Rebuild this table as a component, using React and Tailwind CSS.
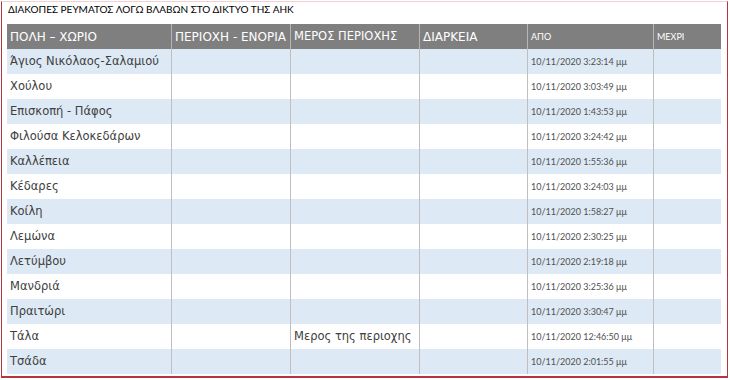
import React from "react";

const rows = [
  ["Άγιος Νικόλαος-Σαλαμιού", "", "", "10/11/2020 3:23:14 μμ"],
  ["Χούλου", "", "", "10/11/2020 3:03:49 μμ"],
  ["Επισκοπή - Πάφος", "", "", "10/11/2020 1:43:53 μμ"],
  ["Φιλούσα Κελοκεδάρων", "", "", "10/11/2020 3:24:42 μμ"],
  ["Καλλέπεια", "", "", "10/11/2020 1:55:36 μμ"],
  ["Κέδαρες", "", "", "10/11/2020 3:24:03 μμ"],
  ["Κοίλη", "", "", "10/11/2020 1:58:27 μμ"],
  ["Λεμώνα", "", "", "10/11/2020 2:30:25 μμ"],
  ["Λετύμβου", "", "", "10/11/2020 2:19:18 μμ"],
  ["Μανδριά", "", "", "10/11/2020 3:25:36 μμ"],
  ["Πραιτώρι", "", "", "10/11/2020 3:30:47 μμ"],
  ["Τάλα", "", "Μερος της περιοχης", "10/11/2020 12:46:50 μμ"],
  ["Τσάδα", "", "", "10/11/2020 2:01:55 μμ"],
];

const cols = "grid grid-cols-[164px_119px_129px_108px_126px_68px]";
const big = "flex items-center pl-[3px] whitespace-nowrap overflow-hidden font-['DejaVu_Sans',sans-serif]";
const small = "flex items-center pl-[3px] whitespace-nowrap overflow-hidden font-['Lato',sans-serif] text-[9px]";

export default function App() {
  return (
    <div className="w-[730px] h-[380px] bg-white p-[1px]">
      <div className="w-[727px] h-[377px] border-l border-r border-b-2 border-[#b8343c] border-t border-t-[#f0d0d3]">
        <div className="h-[22px] pl-[6px] pt-[1px] text-[10px] leading-[13px] text-black whitespace-nowrap font-['Lato',sans-serif]">
          ΔΙΑΚΟΠΕΣ ΡΕΥΜΑΤΟΣ ΛΟΓΩ ΒΛΑΒΩΝ ΣΤΟ ΔΙΚΤΥΟ ΤΗΣ ΑΗΚ
        </div>
        <div className="ml-[5px] w-[714px]">
          <div className={`${cols} h-[25px] bg-[#7f7f7f] text-white`}>
            <div className={`${big} text-[12px]`}>ΠΟΛΗ – ΧΩΡΙΟ</div>
            <div className={`${big} text-[12px] border-l border-[#b5b5b5]`}>ΠΕΡΙΟΧΗ - ΕΝΟΡΙΑ</div>
            <div className={`${big} text-[11.5px] border-l border-[#b5b5b5]`}>ΜΕΡΟΣ ΠΕΡΙΟΧΗΣ</div>
            <div className={`${big} text-[12px] border-l border-[#b5b5b5]`}>ΔΙΑΡΚΕΙΑ</div>
            <div className={`${small} border-l border-[#b5b5b5]`}>ΑΠΟ</div>
            <div className={`${small} border-l border-[#b5b5b5]`}>ΜΕΧΡΙ</div>
          </div>
          {rows.map((r, i) => (
            <div
              key={i}
              className={`${cols} h-[25px] text-[#404040] ${i % 2 === 0 ? "bg-[#dde9f4]" : "bg-white"}`}
            >
              <div className={`${big} text-[11.5px]`}>{r[0]}</div>
              <div className={`${big} text-[11.5px] border-l border-[#bfbfbf]`}>{r[1]}</div>
              <div className={`${big} text-[11.5px] border-l border-[#bfbfbf]`}>{r[2]}</div>
              <div className={`${big} text-[11.5px] border-l border-[#bfbfbf]`}></div>
              <div className={`${small} text-[#505050] border-l border-[#bfbfbf]`}>{r[3]}</div>
              <div className={`${small} border-l border-[#bfbfbf]`}></div>
            </div>
          ))}
        </div>
      </div>
    </div>
  );
}
